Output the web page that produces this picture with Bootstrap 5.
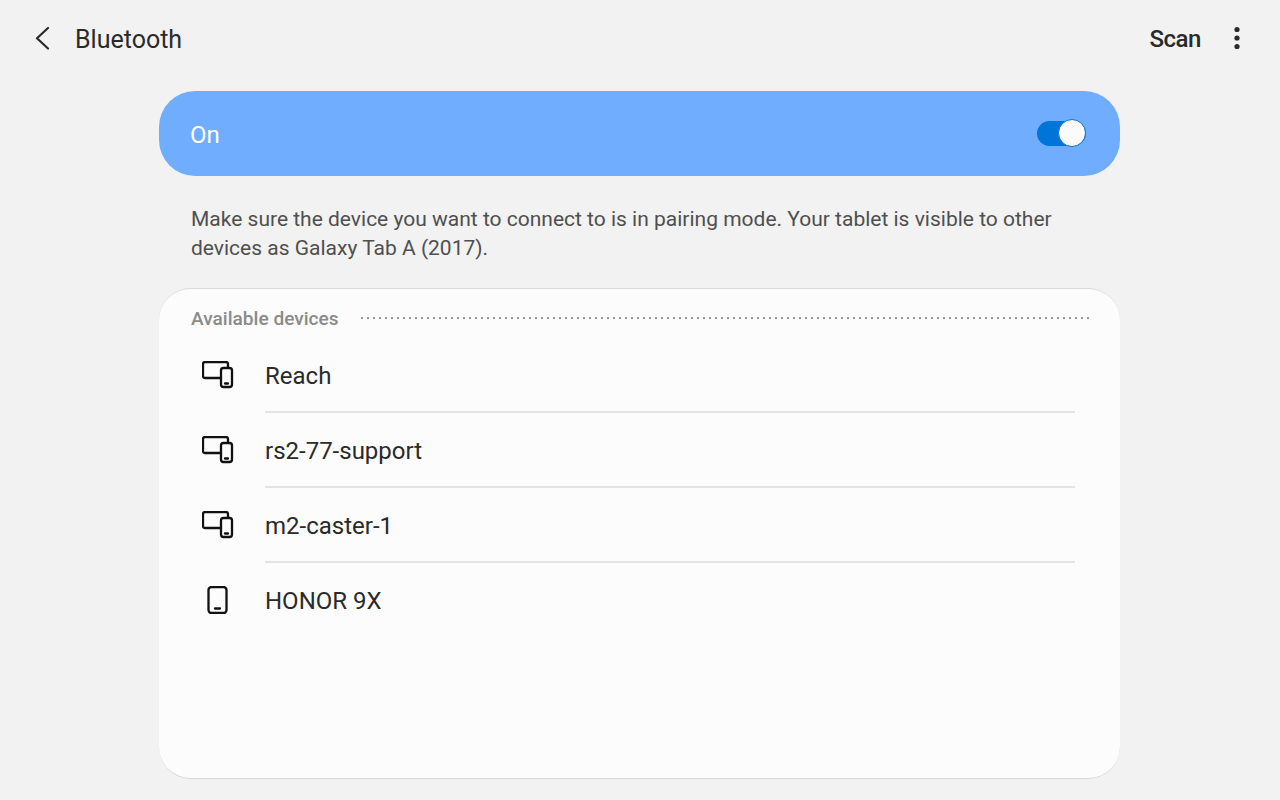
<!DOCTYPE html>
<html lang="en">
<head>
<meta charset="utf-8">
<title>Bluetooth</title>
<link href="https://cdn.jsdelivr.net/npm/bootstrap@5.3.0/dist/css/bootstrap.min.css" rel="stylesheet">
<style>
html,body{height:800px;overflow:hidden}
body{background:#f2f2f2;font-family:Roboto,"Liberation Sans",sans-serif;color:#252525}
.topbar{height:76px;padding:0 0 0 31px}
.back-ic{width:24px;height:24px;margin-right:20px}
.bar-title{font-size:25px;font-weight:400;margin:2px 0 0;line-height:1;color:#2a2a2a}
.scan-txt{font-size:24px;font-weight:500;color:#2a2a2a;margin:2px 32px 0 0;letter-spacing:-.45px}
.more-ic{width:8px;height:24px;margin-right:39px}
.panel-col{width:961px;margin:15px 0 0 159px}
.on-bar{height:85px;background:#70adff;border-radius:36px;padding:0 34px 0 31px}
.on-txt{font-size:24px;color:#fff;line-height:1;padding-top:2px}
.sw-track{width:49px;height:25px;border-radius:13px;background:#0074d9;position:relative}
.sw-knob{position:absolute;right:0;top:-2px;width:28px;height:28px;border-radius:50%;background:#fbfbfb;border:1px solid #0a72c8}
.hint{font-size:21px;line-height:29px;color:#4f4f4f;margin:29px 32px 0;height:83px}
.dev-card{height:491px;background:#fcfcfc;border-radius:32px;border-top:1px solid #dadada;border-bottom:1px solid #d6d6d6}
.sec-head{height:27px;padding:16px 30px 0 32px;box-sizing:content-box}
.sec-txt{font-size:19.1px;font-weight:500;color:#8a8a8a;line-height:27px;white-space:nowrap}
.sec-dots{height:2px;margin:-1px 0 0 22px;background:linear-gradient(90deg,#9a9a9a 0 2px,transparent 2px) 0 0/6px 2px repeat-x}
.dev-list{padding-top:6px}
.dev-row{height:75px}
.dev-ic{width:106px;padding-left:43px;flex:none}
.dev-ic svg{display:block;margin-top:-2px}
.dev-body{height:75px;margin-right:45px;padding-top:3px;font-size:24px;color:#2a2a2a;border-bottom:2px solid #e3e3e3;flex:1}
.dev-row:last-child .dev-body{border-bottom:0;padding-top:1px}
</style>
</head>
<body>
<header class="topbar d-flex align-items-center">
  <svg class="back-ic flex-none" viewBox="0 0 24 24" fill="none" stroke="#2a2a2a" stroke-width="2.2" stroke-linecap="round" stroke-linejoin="round"><path d="M17 2 L6 12.3 L17 22.5"/></svg>
  <h1 class="bar-title">Bluetooth</h1>
  <span class="scan-txt ms-auto">Scan</span>
  <svg class="more-ic" viewBox="0 0 8 24" fill="#2a2a2a"><circle cx="4" cy="3.5" r="2.6"/><circle cx="4" cy="12" r="2.6"/><circle cx="4" cy="20.5" r="2.6"/></svg>
</header>
<main class="panel-col">
  <div class="on-bar d-flex align-items-center justify-content-between">
    <span class="on-txt">On</span>
    <div class="sw-track"><div class="sw-knob"></div></div>
  </div>
  <p class="hint">Make sure the device you want to connect to is in pairing mode. Your tablet is visible to other devices as Galaxy Tab A (2017).</p>
  <section class="dev-card">
    <div class="sec-head d-flex align-items-center">
      <span class="sec-txt">Available devices</span>
      <div class="sec-dots flex-grow-1"></div>
    </div>
    <div class="dev-list">
      <div class="dev-row d-flex align-items-center">
        <div class="dev-ic"><svg width="32" height="28" viewBox="0 0 32 28" fill="none" stroke="#111" stroke-width="2.3" stroke-linejoin="round" stroke-linecap="round"><path d="M19 17H3a2 2 0 0 1-2-2V3a2 2 0 0 1 2-2h21a2 2 0 0 1 2 2v3"/><rect x="19" y="7" width="11" height="19" rx="2.5"/><path d="M23 22.5h3"/></svg></div>
        <div class="dev-body d-flex align-items-center">Reach</div>
      </div>
      <div class="dev-row d-flex align-items-center">
        <div class="dev-ic"><svg width="32" height="28" viewBox="0 0 32 28" fill="none" stroke="#111" stroke-width="2.3" stroke-linejoin="round" stroke-linecap="round"><path d="M19 17H3a2 2 0 0 1-2-2V3a2 2 0 0 1 2-2h21a2 2 0 0 1 2 2v3"/><rect x="19" y="7" width="11" height="19" rx="2.5"/><path d="M23 22.5h3"/></svg></div>
        <div class="dev-body d-flex align-items-center">rs2-77-support</div>
      </div>
      <div class="dev-row d-flex align-items-center">
        <div class="dev-ic"><svg width="32" height="28" viewBox="0 0 32 28" fill="none" stroke="#111" stroke-width="2.3" stroke-linejoin="round" stroke-linecap="round"><path d="M19 17H3a2 2 0 0 1-2-2V3a2 2 0 0 1 2-2h21a2 2 0 0 1 2 2v3"/><rect x="19" y="7" width="11" height="19" rx="2.5"/><path d="M23 22.5h3"/></svg></div>
        <div class="dev-body d-flex align-items-center">m2-caster-1</div>
      </div>
      <div class="dev-row d-flex align-items-center">
        <div class="dev-ic"><svg width="32" height="28" viewBox="0 0 32 28" fill="none" stroke="#111" stroke-width="2.3" stroke-linejoin="round" stroke-linecap="round"><rect x="6.5" y="1" width="18" height="26" rx="3"/><path d="M13 22.5h5"/></svg></div>
        <div class="dev-body d-flex align-items-center">HONOR 9X</div>
      </div>
    </div>
  </section>
</main>
<script src="https://cdn.jsdelivr.net/npm/bootstrap@5.3.0/dist/js/bootstrap.bundle.min.js"></script>
</body>
</html>
